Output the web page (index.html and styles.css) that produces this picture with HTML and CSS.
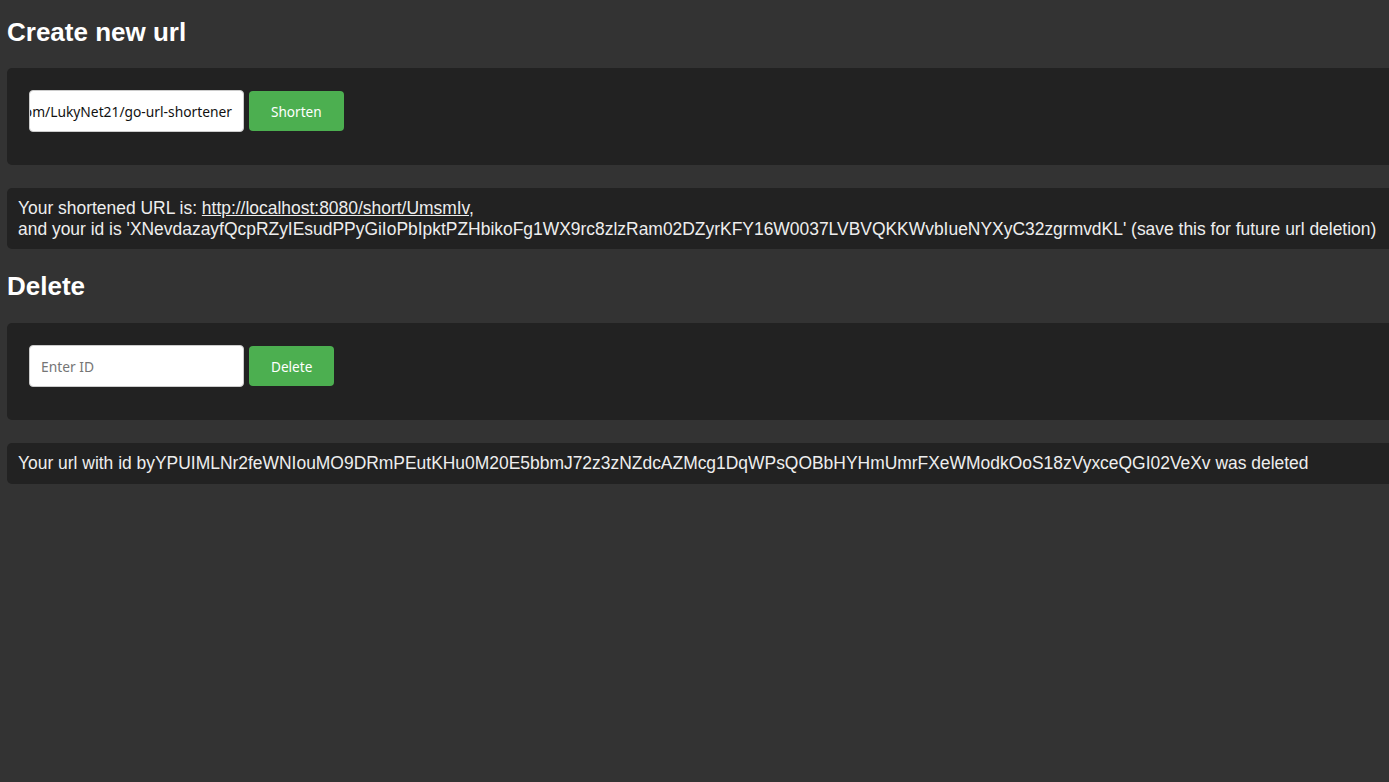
FILE: index.html
```html
<!DOCTYPE html>
<html lang="en">
<head>
<meta charset="utf-8">
<title>URL shortener</title>
<link rel="stylesheet" href="styles.css">
</head>
<body>
<h2 class="title first">Create new url</h2>
<div class="card">
  <form class="form">
    <div class="field filled"><span>https://github.com/LukyNet21/go-url-shortener</span></div>
    <button type="button" class="btn">Shorten</button>
  </form>
</div>
<div class="result">Your shortened URL is: <a href="#" class="link">http://localhost:8080/short/UmsmIv</a>,<br>and your id is 'XNevdazayfQcpRZyIEsudPPyGiIoPbIpktPZHbikoFg1WX9rc8zlzRam02DZyrKFY16W0037LVBVQKKWvbIueNYXyC32zgrmvdKL' (save this for future url deletion)</div>
<h2 class="title">Delete</h2>
<div class="card">
  <form class="form">
    <input class="field" type="text" placeholder="Enter ID">
    <button type="button" class="btn">Delete</button>
  </form>
</div>
<div class="result">Your url with id byYPUIMLNr2feWNIouMO9DRmPEutKHu0M20E5bbmJ72z3zNZdcAZMcg1DqWPsQOBbHYHmUmrFXeWModkOoS18zVyxceQGI02VeXv was deleted</div>
</body>
</html>
```

FILE: styles.css
```css
html {
  background: #333333;
}
body {
  margin: 0;
  padding: 0 0 0 7px;
  overflow-x: hidden;
  background: #333333;
  color: #eeeeee;
  font-family: "Liberation Sans", Arial, sans-serif;
  font-size: 17.46px;
}
.title {
  font-family: "Liberation Sans", Arial, sans-serif;
  font-size: 26px;
  line-height: 30px;
  font-weight: bold;
  color: #ffffff;
  margin: 0 0 22px;
}
.first {
  padding-top: 17px;
  margin-bottom: 21px;
}
.card {
  background: #222222;
  border-radius: 5px;
  padding: 22px 22px 33px;
  margin: 0 -60px 23px 0;
}
.form {
  display: flex;
  align-items: center;
  gap: 5px;
}
.field {
  box-sizing: border-box;
  width: 215px;
  height: 42px;
  padding: 0 11px;
  border: 1px solid #cccccc;
  border-radius: 4px;
  background: #ffffff;
  color: #111111;
  font-family: "Noto Sans", "Open Sans", sans-serif;
  font-size: 13.8px;
  outline: none;
}
.field::placeholder {
  color: #757575;
}
.filled {
  display: flex;
  align-items: center;
  justify-content: flex-end;
  overflow: hidden;
  white-space: nowrap;
}
.filled span {
  flex: none;
}
.btn {
  height: 40px;
  padding: 0 22px;
  border: none;
  border-radius: 4px;
  background: #4caf50;
  color: #ffffff;
  font-family: "Noto Sans", "Open Sans", sans-serif;
  font-size: 13.6px;
}
.result {
  background: #222222;
  border-radius: 5px;
  padding: 10px 11px;
  line-height: 20.5px;
  margin: 0 -60px 22px 0;
  white-space: nowrap;
}
.link {
  color: #eeeeee;
  text-decoration: underline;
}
```
